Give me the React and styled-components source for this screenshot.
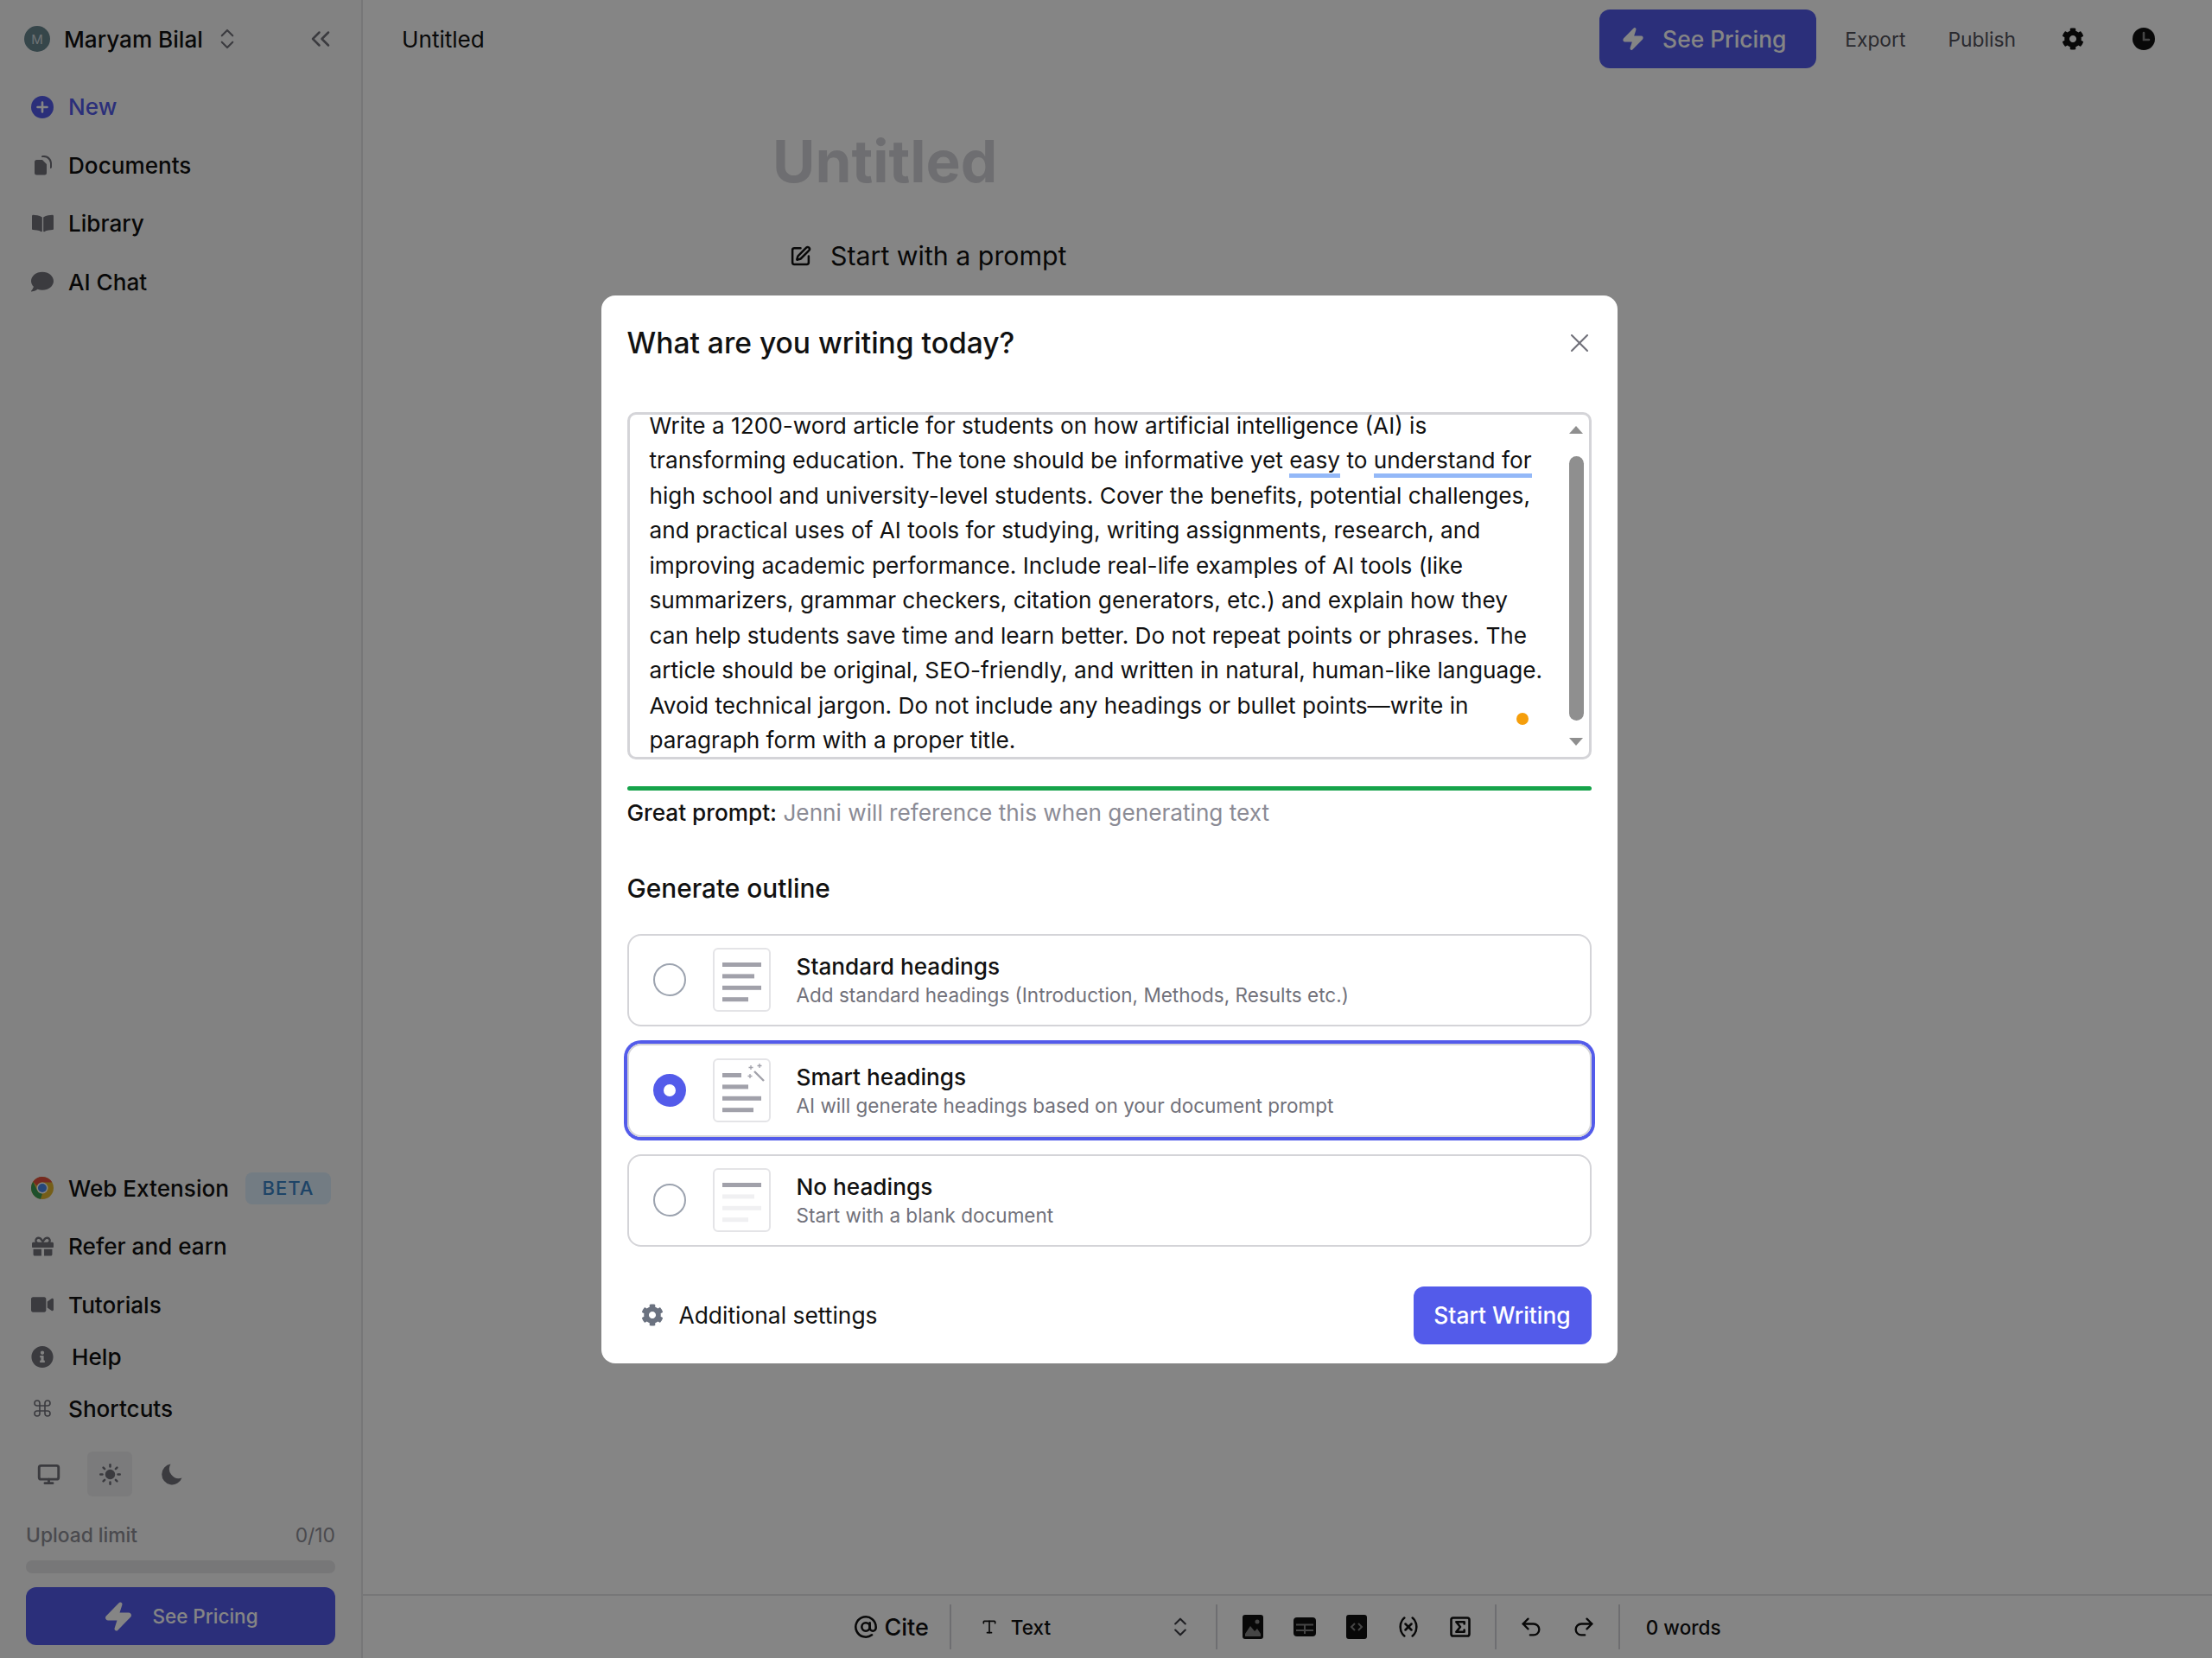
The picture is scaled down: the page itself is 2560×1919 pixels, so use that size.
import React from 'react';
import styled, { createGlobalStyle } from 'styled-components';
import {
  AtSign, ChevronsLeft, ChevronsUpDown, Command, Monitor, Redo2, SquareSigma,
  Sun, Type, Undo2, Variable, X, Zap, SquarePen,
} from 'lucide-react';
import { FaBookOpen, FaCog, FaGift, FaInfoCircle, FaVideo, FaComment } from 'react-icons/fa';

const GlobalStyle = createGlobalStyle`
  html, body {
    margin: 0;
    height: 100%;
    overflow: hidden;
    background: #fff;
    font-family: Inter, "Liberation Sans", sans-serif;
    color: #111;
  }
  #root { height: 100%; }
  * { box-sizing: border-box; }
`;

const Page = styled.div`
  display: flex;
  height: 100vh;
`;

const Sidebar = styled.aside`
  width: 420px;
  flex: none;
  display: flex;
  flex-direction: column;
  background: #fafafa;
  border-right: 2px solid #e4e4e7;
`;

const Account = styled.div`
  height: 90px;
  display: flex;
  align-items: center;
  padding: 0 29px 0 28px;
  color: #71717a;
`;

const Avatar = styled.span`
  width: 30px;
  height: 30px;
  border-radius: 50%;
  background: #68868f;
  color: #d4dde0;
  font-size: 15px;
  display: flex;
  align-items: center;
  justify-content: center;
  margin-right: 16px;
`;

const AccountName = styled.span`
  font-size: 26.13px;
  font-weight: 500;
  color: #111;
  margin-right: 13px;
`;

const Collapse = styled.span`
  margin-left: auto;
  display: flex;
`;

const NavGroup = styled.nav`
  display: flex;
  flex-direction: column;
`;

const NavRow = styled.div`
  display: flex;
  align-items: center;
  height: ${(p) => p.$h || 67.5}px;
  padding: 0 30px 0 36px;
  gap: ${(p) => p.$gap || 17}px;
  font-size: 26.13px;
  font-weight: 450;
  white-space: nowrap;
  color: ${(p) => p.$color || '#111'};
`;

const NavIcon = styled.span`
  width: 26px;
  height: 26px;
  flex: none;
  display: flex;
  align-items: center;
  justify-content: center;
  color: ${(p) => p.$color || '#71717a'};
`;

const Beta = styled.span`
  margin-left: auto;
  margin-right: 5px;
  width: 99px;
  height: 37px;
  border-radius: 8px;
  background: #dcedfb;
  color: #3a83c6;
  font-size: 22px;
  letter-spacing: 1px;
  display: flex;
  align-items: center;
  justify-content: center;
`;

const Spacer = styled.div`
  flex: 1;
`;

const ThemeRow = styled.div`
  display: flex;
  align-items: center;
  padding-left: 30px;
  margin-top: 16px;
  height: 52px;
`;

const ThemeButton = styled.span`
  width: 52px;
  height: 52px;
  margin-right: ${(p) => p.$mr || 0}px;
  margin-left: ${(p) => p.$ml || 0}px;
  border-radius: 6px;
  display: flex;
  align-items: center;
  justify-content: center;
  color: #71717a;
  background: ${(p) => (p.$active ? '#ececee' : 'transparent')};
`;

const UploadRow = styled.div`
  display: flex;
  justify-content: space-between;
  align-items: center;
  margin: 28px 30px 0;
  height: 32px;
  font-size: 22.8px;
  color: #8e8e96;
`;

const UploadLabel = styled.span`
  font-weight: 500;
`;

const Progress = styled.div`
  height: 15px;
  margin: 14px 30px 16px;
  border-radius: 7px;
  background: #e4e4e7;
`;

const PricingButton = styled.div`
  height: ${(p) => p.$h}px;
  width: ${(p) => p.$w || 'auto'};
  margin: ${(p) => p.$m || 0};
  padding-right: ${(p) => p.$pr || 0}px;
  border-radius: 12px;
  background: #535bea;
  color: #fff;
  font-size: ${(p) => p.$size}px;
  font-weight: 500;
  display: flex;
  align-items: center;
  justify-content: center;
  gap: ${(p) => p.$gap}px;
`;

const Main = styled.main`
  flex: 1;
  display: flex;
  flex-direction: column;
  min-width: 0;
`;

const TopBar = styled.header`
  height: 90px;
  flex: none;
  display: flex;
  align-items: center;
  padding: 0 66px 0 45px;
  font-size: 26.13px;
`;

const TopActions = styled.div`
  margin-left: auto;
  display: flex;
  align-items: center;
`;

const TopLink = styled.span`
  margin-left: ${(p) => p.$ml}px;
  font-size: 22.8px;
  display: flex;
  color: ${(p) => p.$color || '#52525b'};
`;

const Canvas = styled.section`
  flex: 1;
  padding: 52px 0 0 474px;
`;

const DocTitle = styled.h1`
  margin: 0;
  font-size: 67.5px;
  line-height: 90px;
  font-weight: 700;
  color: #d4d4d8;
`;

const PromptStart = styled.div`
  display: flex;
  align-items: center;
  gap: 22px;
  margin: 46px 0 0 20px;
  font-size: 30.3px;
  color: #111;
`;

const BottomBar = styled.footer`
  height: 74px;
  flex: none;
  border-top: 2px solid #e4e4e7;
  display: flex;
  align-items: center;
  justify-content: center;
  font-size: 22.5px;
`;

const ToolGroup = styled.div`
  height: 52px;
  display: flex;
  align-items: center;
  padding: 0 ${(p) => p.$pr ?? 28}px 0 ${(p) => p.$pl ?? 28}px;
  gap: ${(p) => p.$gap || 0}px;
  border-right: ${(p) => (p.$last ? 'none' : '2px solid #d4d4d8')};
`;

const CiteLabel = styled.span`
  font-size: 27px;
  font-weight: 500;
`;

const WordCount = styled.span`
  font-weight: 500;
`;

const TextSelect = styled.div`
  width: 245px;
  display: flex;
  align-items: center;
  font-weight: 500;
  gap: 15px;
`;

const SelectChevrons = styled.span`
  margin-left: auto;
  display: flex;
  color: #3f3f46;
`;

const ToolIcon = styled.span`
  width: 28px;
  height: 28px;
  display: flex;
  align-items: center;
  justify-content: center;
  color: #111;
`;

const Overlay = styled.div`
  position: fixed;
  inset: 0;
  padding-left: 7px;
  background: rgba(0, 0, 0, 0.48);
  display: flex;
  align-items: center;
  justify-content: center;
`;

const Modal = styled.div`
  width: 1176px;
  padding: 0 30px 22px;
  border-radius: 16px;
  background: #fff;
`;

const ModalHead = styled.div`
  height: 110px;
  display: flex;
  align-items: center;
  justify-content: space-between;
  margin: 0 -4px 25px 0;
`;

const ModalTitle = styled.h2`
  margin: 0;
  font-size: 33.6px;
  font-weight: 500;
  color: #111;
`;

const PromptBox = styled.div`
  position: relative;
  height: 402px;
  border: 3px solid #d4d4d8;
  border-radius: 10px;
  overflow: hidden;
  padding: 0 44px 0 23px;
`;

const PromptText = styled.p`
  margin: -7px 0 0;
  font-size: 26.2px;
  line-height: 40.5px;
  color: #111;
`;

const Flagged = styled.span`
  border-bottom: 5px solid #93b8f8;
`;

const ScrollArrow = styled.span`
  position: absolute;
  right: 7px;
  ${(p) => (p.$up ? 'top: 13px;' : 'bottom: 13px;')}
  width: 0;
  height: 0;
  border-left: 8px solid transparent;
  border-right: 8px solid transparent;
  ${(p) => (p.$up ? 'border-bottom: 9px solid #8f8f8f;' : 'border-top: 9px solid #8f8f8f;')}
`;

const ScrollThumb = styled.span`
  position: absolute;
  right: 6px;
  top: 48px;
  width: 17px;
  height: 306px;
  border-radius: 9px;
  background: #8f8f8f;
`;

const GrammarDot = styled.span`
  position: absolute;
  right: 70px;
  bottom: 37px;
  width: 14px;
  height: 14px;
  border-radius: 50%;
  background: #f59e0b;
`;

const ScoreBar = styled.div`
  height: 5px;
  margin-top: 31px;
  border-radius: 3px;
  background: #16a34a;
`;

const ScoreHint = styled.div`
  margin-top: 10px;
  height: 32px;
  line-height: 32px;
  font-size: 26.2px;
  color: #8b8b95;
`;

const ScoreLabel = styled.strong`
  font-weight: 500;
  color: #111;
`;

const SectionTitle = styled.h3`
  margin: 53px 0 35px;
  font-size: 29.8px;
  line-height: 36px;
  font-weight: 500;
  color: #111;
`;

const OptionList = styled.div`
  display: flex;
  flex-direction: column;
  gap: 20px;
`;

const OptionCard = styled.div`
  height: 107.5px;
  display: flex;
  align-items: center;
  padding: 0 28px;
  border-radius: 16px;
  border: 2px solid #d4d4d8;
  box-shadow: ${(p) => (p.$selected ? '0 0 0 4px #535bea' : 'none')};
`;

const Radio = styled.span`
  width: 38px;
  height: 38px;
  flex: none;
  border-radius: 50%;
  border: ${(p) => (p.$on ? '12px solid #535bea' : '2px solid #9ca3af')};
  background: #fff;
  margin-right: 31px;
`;

const Thumb = styled.span`
  width: 67px;
  height: 74px;
  flex: none;
  border: 2px solid #e4e4e7;
  border-radius: 6px;
  display: flex;
  margin-right: 30px;
`;

const OptionText = styled.div`
  display: flex;
  flex-direction: column;
`;

const OptionTitle = styled.span`
  font-size: 26.2px;
  line-height: 36px;
  font-weight: 500;
  color: #111;
`;

const OptionSub = styled.span`
  font-size: 22.5px;
  line-height: 30px;
  color: #71717a;
`;

const ModalFoot = styled.div`
  margin-top: 45.5px;
  display: flex;
  align-items: center;
  padding-left: 16px;
  gap: 18px;
  font-size: 26.4px;
  color: #111;
`;

const StartButton = styled.button`
  margin-left: auto;
  width: 206px;
  height: 67px;
  border: none;
  border-radius: 12px;
  background: #535bea;
  color: #fff;
  font: 500 26.4px Inter, "Liberation Sans", sans-serif;
`;

const ChromeLogo = () => (
  <svg width="30" height="30" viewBox="0 0 30 30">
    <circle cx="15" cy="15" r="15" fill="#e0b52f" />
    <path d="M15 0a15 15 0 0 1 13 7.500H15a7.500 7.500 0 0 0-7 4.700L2.600 6.600A15 15 0 0 1 15 0z" fill="#e2503f" />
    <path d="M2.600 6.600 8.400 18.800a7.500 7.500 0 0 0 6.600 3.700L12.700 29.800A15 15 0 0 1 2.600 6.600z" fill="#3a9a55" />
    <circle cx="15" cy="15" r="7.500" fill="#fff" />
    <circle cx="15" cy="15" r="5.800" fill="#4a86e8" />
  </svg>
);

const DocumentsIcon = () => (
  <svg width="24" height="24" viewBox="0 0 24 24" fill="currentColor">
    <path d="M3 8.500A2.500 2.500 0 0 1 5.500 6H12l5 5v10a2.500 2.500 0 0 1-2.500 2.500h-9A2.500 2.500 0 0 1 3 21z" />
    <path d="M12 1h2.500C19 1 23 5 23 10v4.500a2 2 0 0 1-2 1.500v-5.500C21 6.500 17.500 3 13.500 3H11a2 2 0 0 1 1-2z" />
  </svg>
);

const PlusBadge = () => (
  <svg width="26" height="26" viewBox="0 0 26 26">
    <circle cx="13" cy="13" r="13" fill="#535bea" />
    <path d="M13 7.500v11M7.500 13h11" stroke="#fff" strokeWidth="2.600" strokeLinecap="round" />
  </svg>
);

const ClockIcon = () => (
  <svg width="26" height="26" viewBox="0 0 26 26">
    <circle cx="13" cy="13" r="13" fill="#111" />
    <path d="M13 6v8h6" fill="none" stroke="#858585" strokeWidth="2.600" strokeLinecap="round" />
  </svg>
);

const MoonIcon = () => (
  <svg width="26" height="26" viewBox="0 0 26 26" fill="currentColor">
    <path d="M11.500 1.500a12 12 0 1 0 13 16A11 11 0 0 1 11.500 1.500z" />
  </svg>
);

const ImageTool = () => (
  <svg width="24" height="28" viewBox="0 0 24 28">
    <rect width="24" height="28" rx="3" fill="#111" />
    <circle cx="17" cy="8" r="2.500" fill="#858585" />
    <path d="M3 22l6-9 5 6 3-3 4 6v3H3z" fill="#858585" />
  </svg>
);

const TableTool = () => (
  <svg width="26" height="22" viewBox="0 0 26 22">
    <rect width="26" height="22" rx="4" fill="#111" />
    <path d="M3 8.500h20M3 15h20M13 8.500V19" stroke="#858585" strokeWidth="2" />
  </svg>
);

const CodeTool = () => (
  <svg width="24" height="28" viewBox="0 0 24 28">
    <rect width="24" height="28" rx="3" fill="#111" />
    <path d="M10 10l-4 4 4 4M14 10l4 4-4 4" fill="none" stroke="#858585" strokeWidth="2" />
  </svg>
);

// bar widths for the small page previews on the outline options
const THUMB_BARS = {
  standard: [[45, '#a1a1aa'], [37, '#a1a1aa'], [45, '#a1a1aa'], [30, '#a1a1aa']],
  smart: [[22, '#a1a1aa'], [30, '#a1a1aa'], [45, '#a1a1aa'], [36, '#a1a1aa']],
  none: [[45, '#a1a1aa'], [37, '#f0f0f2'], [45, '#f0f0f2'], [30, '#f0f0f2']],
};

const OutlineThumb = ({ kind }) => (
  <Thumb>
    <svg width="63" height="70" viewBox="0 0 63 70">
      {THUMB_BARS[kind].map(([w, color], i) => (
        <rect key={i} x="9" y={15 + i * 13.4} width={w} height="5" fill={color} />
      ))}
      {kind === 'smart' && (
        <g stroke="#a1a1aa" fill="none" strokeWidth="1.300">
          <path d="M46 13l11 11" strokeWidth="2.400" />
          <path d="M42 6v5M39.500 8.500h5M52 4v5M49.500 6.500h5M41 16v5M38.500 18.500h5" />
        </g>
      )}
    </svg>
  </Thumb>
);

const OPTIONS = [
  { kind: 'standard', title: 'Standard headings', sub: 'Add standard headings (Introduction, Methods, Results etc.)' },
  { kind: 'smart', title: 'Smart headings', sub: 'AI will generate headings based on your document prompt', selected: true },
  { kind: 'none', title: 'No headings', sub: 'Start with a blank document' },
];

const App = () => (
  <>
    <GlobalStyle />
    <Page>
      <Sidebar>
        <Account>
          <Avatar>M</Avatar>
          <AccountName>Maryam Bilal</AccountName>
          <ChevronsUpDown size={30} strokeWidth={1.7} />
          <Collapse><ChevronsLeft size={36} strokeWidth={1.7} /></Collapse>
        </Account>
        <NavGroup>
          <NavRow $color="#535bea"><NavIcon><PlusBadge /></NavIcon>New</NavRow>
          <NavRow><NavIcon><DocumentsIcon /></NavIcon>Documents</NavRow>
          <NavRow><NavIcon><FaBookOpen size={25} /></NavIcon>Library</NavRow>
          <NavRow><NavIcon><FaComment size={26} /></NavIcon>AI Chat</NavRow>
        </NavGroup>
        <Spacer />
        <NavGroup>
          <NavRow><NavIcon><ChromeLogo /></NavIcon>Web Extension<Beta>BETA</Beta></NavRow>
          <NavRow><NavIcon><FaGift size={25} /></NavIcon>Refer and earn</NavRow>
          <NavRow><NavIcon><FaVideo size={26} /></NavIcon>Tutorials</NavRow>
          <NavRow $h={52} $gap={21}><NavIcon><FaInfoCircle size={27} /></NavIcon>Help</NavRow>
          <NavRow $h={68}><NavIcon><Command size={24} strokeWidth={1.6} /></NavIcon>Shortcuts</NavRow>
        </NavGroup>
        <ThemeRow>
          <ThemeButton $mr={19}><Monitor size={27} strokeWidth={2.6} /></ThemeButton>
          <ThemeButton $active><Sun size={27} strokeWidth={2.2} fill="currentColor" /></ThemeButton>
          <ThemeButton $ml={20}><MoonIcon /></ThemeButton>
        </ThemeRow>
        <UploadRow><UploadLabel>Upload limit</UploadLabel><span>0/10</span></UploadRow>
        <Progress />
        <PricingButton $h={67} $m="0 30px 15px" $size={22.5} $gap={21}>
          <Zap size={36} fill="currentColor" />See Pricing
        </PricingButton>
      </Sidebar>
      <Main>
        <TopBar>
          Untitled
          <TopActions>
            <PricingButton $h={68} $w="251px" $pr={10} $size={26.4} $gap={20}>
              <Zap size={28} fill="currentColor" />See Pricing
            </PricingButton>
            <TopLink $ml={33}>Export</TopLink>
            <TopLink $ml={49}>Publish</TopLink>
            <TopLink $ml={53} $color="#111"><FaCog size={26} /></TopLink>
            <TopLink $ml={56}><ClockIcon /></TopLink>
          </TopActions>
        </TopBar>
        <Canvas>
          <DocTitle>Untitled</DocTitle>
          <PromptStart><SquarePen size={25} strokeWidth={2.4} />Start with a prompt</PromptStart>
        </Canvas>
        <BottomBar>
          <ToolGroup $pl={0} $pr={24} $gap={7}>
            <ToolIcon><AtSign size={28} strokeWidth={2.2} /></ToolIcon>
            <CiteLabel>Cite</CiteLabel>
          </ToolGroup>
          <ToolGroup $pl={34} $pr={27}>
            <TextSelect>
              <Type size={20} strokeWidth={2} />Text
              <SelectChevrons><ChevronsUpDown size={28} strokeWidth={1.8} /></SelectChevrons>
            </TextSelect>
          </ToolGroup>
          <ToolGroup $pl={27} $pr={26} $gap={32}>
            <ToolIcon><ImageTool /></ToolIcon>
            <ToolIcon><TableTool /></ToolIcon>
            <ToolIcon><CodeTool /></ToolIcon>
            <ToolIcon><Variable size={28} strokeWidth={2.2} /></ToolIcon>
            <ToolIcon><SquareSigma size={28} strokeWidth={2.2} /></ToolIcon>
          </ToolGroup>
          <ToolGroup $pl={26} $pr={26} $gap={33}>
            <ToolIcon><Undo2 size={30} strokeWidth={2} /></ToolIcon>
            <ToolIcon><Redo2 size={30} strokeWidth={2} /></ToolIcon>
          </ToolGroup>
          <ToolGroup $last $pl={30} $pr={0}><WordCount>0 words</WordCount></ToolGroup>
        </BottomBar>
      </Main>
    </Page>
    <Overlay>
      <Modal>
        <ModalHead>
          <ModalTitle>What are you writing today?</ModalTitle>
          <X size={36} strokeWidth={1.4} color="#71717a" />
        </ModalHead>
        <PromptBox>
          <PromptText>
            Write a 1200-word article for students on how artificial intelligence (AI) is transforming
            education. The tone should be informative yet <Flagged>easy</Flagged> to <Flagged>understand for</Flagged> high
            school and university-level students. Cover the benefits, potential challenges, and practical
            uses of AI tools for studying, writing assignments, research, and improving academic
            performance. Include real-life examples of AI tools (like summarizers, grammar checkers,
            citation generators, etc.) and explain how they can help students save time and learn better.
            Do not repeat points or phrases. The article should be original, SEO-friendly, and written in
            natural, human-like language. Avoid technical jargon. Do not include any headings or bullet
            points—write in paragraph form with a proper title.
          </PromptText>
          <ScrollArrow $up />
          <ScrollThumb />
          <ScrollArrow />
          <GrammarDot />
        </PromptBox>
        <ScoreBar />
        <ScoreHint>
          <ScoreLabel>Great prompt:</ScoreLabel> Jenni will reference this when generating text
        </ScoreHint>
        <SectionTitle>Generate outline</SectionTitle>
        <OptionList>
          {OPTIONS.map((o) => (
            <OptionCard key={o.kind} $selected={o.selected}>
              <Radio $on={o.selected} />
              <OutlineThumb kind={o.kind} />
              <OptionText>
                <OptionTitle>{o.title}</OptionTitle>
                <OptionSub>{o.sub}</OptionSub>
              </OptionText>
            </OptionCard>
          ))}
        </OptionList>
        <ModalFoot>
          <FaCog size={26} color="#6b7280" />
          Additional settings
          <StartButton>Start Writing</StartButton>
        </ModalFoot>
      </Modal>
    </Overlay>
  </>
);

export default App;
